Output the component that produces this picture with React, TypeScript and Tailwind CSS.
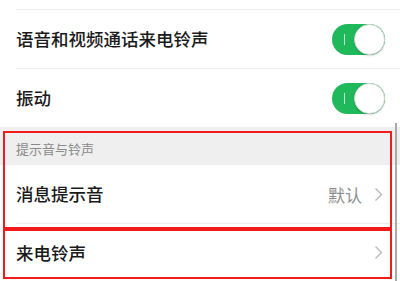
import React from 'react'

const font = { fontFamily: '"Noto Sans CJK SC", "Noto Sans", sans-serif' }

const Toggle: React.FC = () => (
  <div className="relative w-[53px] h-[31px] rounded-full bg-[#1fb85a]">
    <span className="absolute left-[12px] top-[10px] w-[1px] h-[11px] bg-[#bfeccf]" />
    <span className="absolute right-0 top-0 w-[31px] h-[31px] rounded-full bg-white border border-[#d8d8d8] shadow-[0_1px_2px_rgba(0,0,0,0.15)]" />
  </div>
)

const Chevron: React.FC = () => (
  <svg width="9" height="15" viewBox="0 0 9 15" fill="none" stroke="#b8b8b8" strokeWidth="1.4">
    <path d="M1.5 1.5 7.5 7.5 1.5 13.5" />
  </svg>
)

export default function App() {
  return (
    <div className="relative w-[400px] h-[281px] overflow-hidden bg-white text-[#1a1a1a]" style={font}>
      <div className="h-[10px] border-b border-[#ececec] ml-[16px]" />

      <div className="flex items-center justify-between h-[58px] pl-[16px] pr-[15px]">
        <span className="text-[17.5px] leading-none font-medium">语音和视频通话来电铃声</span>
        <Toggle />
      </div>
      <div className="ml-[16px] border-b border-[#ececec]" />

      <div className="flex items-center justify-between h-[58px] pl-[16px] pr-[15px]">
        <span className="text-[17.5px] leading-none font-medium">振动</span>
        <Toggle />
      </div>

      <div className="flex items-center h-[38px] pl-[16px] pt-[4px] bg-[#efefef]">
        <span className="text-[13px] text-[#8a8a8a] leading-none">提示音与铃声</span>
      </div>

      <div className="flex items-center justify-between h-[58px] pl-[16px] pr-[17px]">
        <span className="text-[17.5px] leading-none font-medium">消息提示音</span>
        <div className="flex items-center gap-[12px]">
          <span className="text-[17px] text-[#8e8e8e] leading-none">默认</span>
          <Chevron />
        </div>
      </div>
      <div className="ml-[16px] border-b border-[#ececec]" />

      <div className="flex items-center justify-between h-[57px] pl-[16px] pr-[17px]">
        <span className="text-[17.5px] leading-none font-medium">来电铃声</span>
        <Chevron />
      </div>

      {/* scrollbar */}
      <div className="absolute right-[3px] top-[123px] w-[2px] h-[158px] bg-[#a8a8a8]" />

      {/* annotation boxes */}
      <div className="absolute left-[3px] top-[131px] w-[389px] h-[98px] border-2 border-[#f21b1b]" />
      <div className="absolute left-[3px] top-[229px] w-[389px] h-[50px] border-2 border-[#f21b1b]" />
    </div>
  )
}
